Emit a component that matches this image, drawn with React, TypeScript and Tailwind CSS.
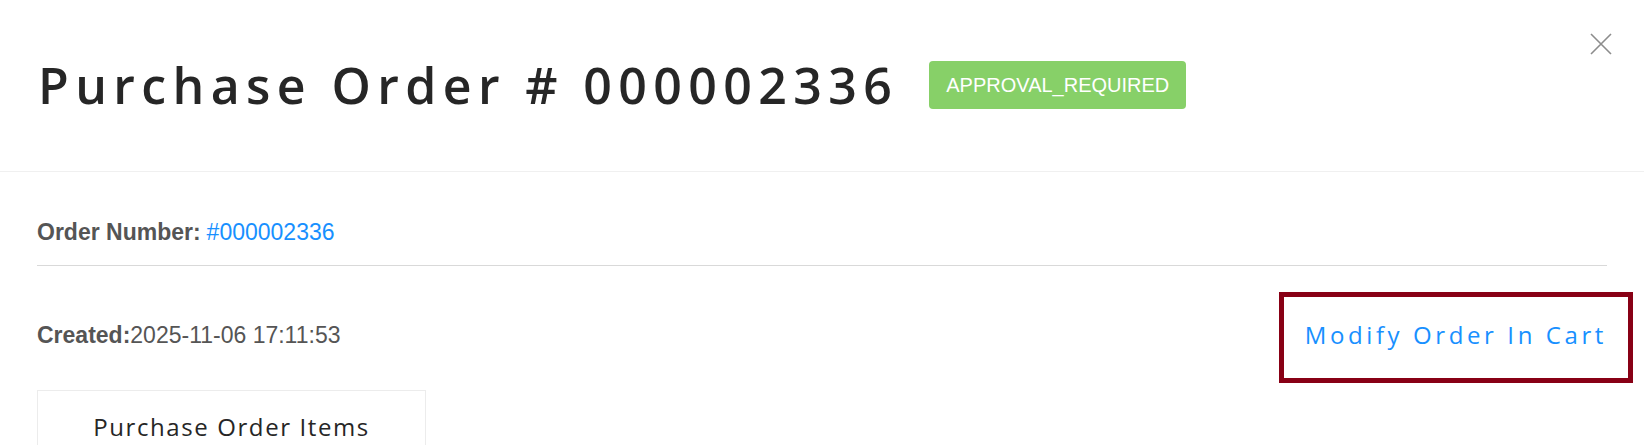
const montserratLike = "font-['Open_Sans',_'DejaVu_Sans',_sans-serif]";

function CloseIcon() {
  return (
    <svg width="22" height="22" viewBox="0 0 22 22" fill="none" stroke="#8c8c8c" strokeWidth="1.6">
      <path d="M1 1L21 21M21 1L1 21" />
    </svg>
  );
}

export default function App() {
  return (
    <div className="w-[1644px] h-[445px] overflow-hidden bg-white">
      <div className="h-[172px] border-b border-[#f0f0f0] flex items-start justify-between pl-[38px] pr-[32px]">
        <div className="flex items-center gap-[31px] pt-[60px]">
          <h1 className={`${montserratLike} text-[50px] leading-none font-semibold tracking-[6.4px] text-[#262626]`}>
            Purchase Order # 000002336
          </h1>
          <span className="h-[48px] px-[17px] flex items-center rounded-[4px] bg-[#87d068] text-white text-[20px] font-['Liberation_Sans',_Arial,_sans-serif]">
            APPROVAL_REQUIRED
          </span>
        </div>
        <button className="mt-[33px]">
          <CloseIcon />
        </button>
      </div>

      <div className="px-[37px] font-['Liberation_Sans',_Arial,_sans-serif]">
        <div className="h-[94px] flex items-end pb-[21px] border-b border-[#d9d9d9] text-[23px] leading-none text-[#555]">
          <span className="font-bold">Order Number:</span>
          <a className="ml-[6px] text-[#1890ff]">#000002336</a>
        </div>

        <div className="flex items-center justify-between mt-[26px]">
          <div className="text-[23px] leading-none text-[#555] pb-[4px]">
            <span className="font-bold">Created:</span>2025-11-06 17:11:53
          </div>
          <button className={`-mr-[26px] h-[91px] pl-[21px] pr-[21px] pb-[5px] border-[5px] border-[#880015] ${montserratLike} text-[24px] tracking-[3.6px] text-[#1890ff]`}>
            Modify Order In Cart
          </button>
        </div>

        <div className="mt-[7px] w-[389px] h-[60px] border border-[#ececec] flex justify-center pt-[24px]">
          <span className={`${montserratLike} text-[24px] leading-none tracking-[1.6px] text-[#262626]`}>
            Purchase Order Items
          </span>
        </div>
      </div>
    </div>
  );
}
